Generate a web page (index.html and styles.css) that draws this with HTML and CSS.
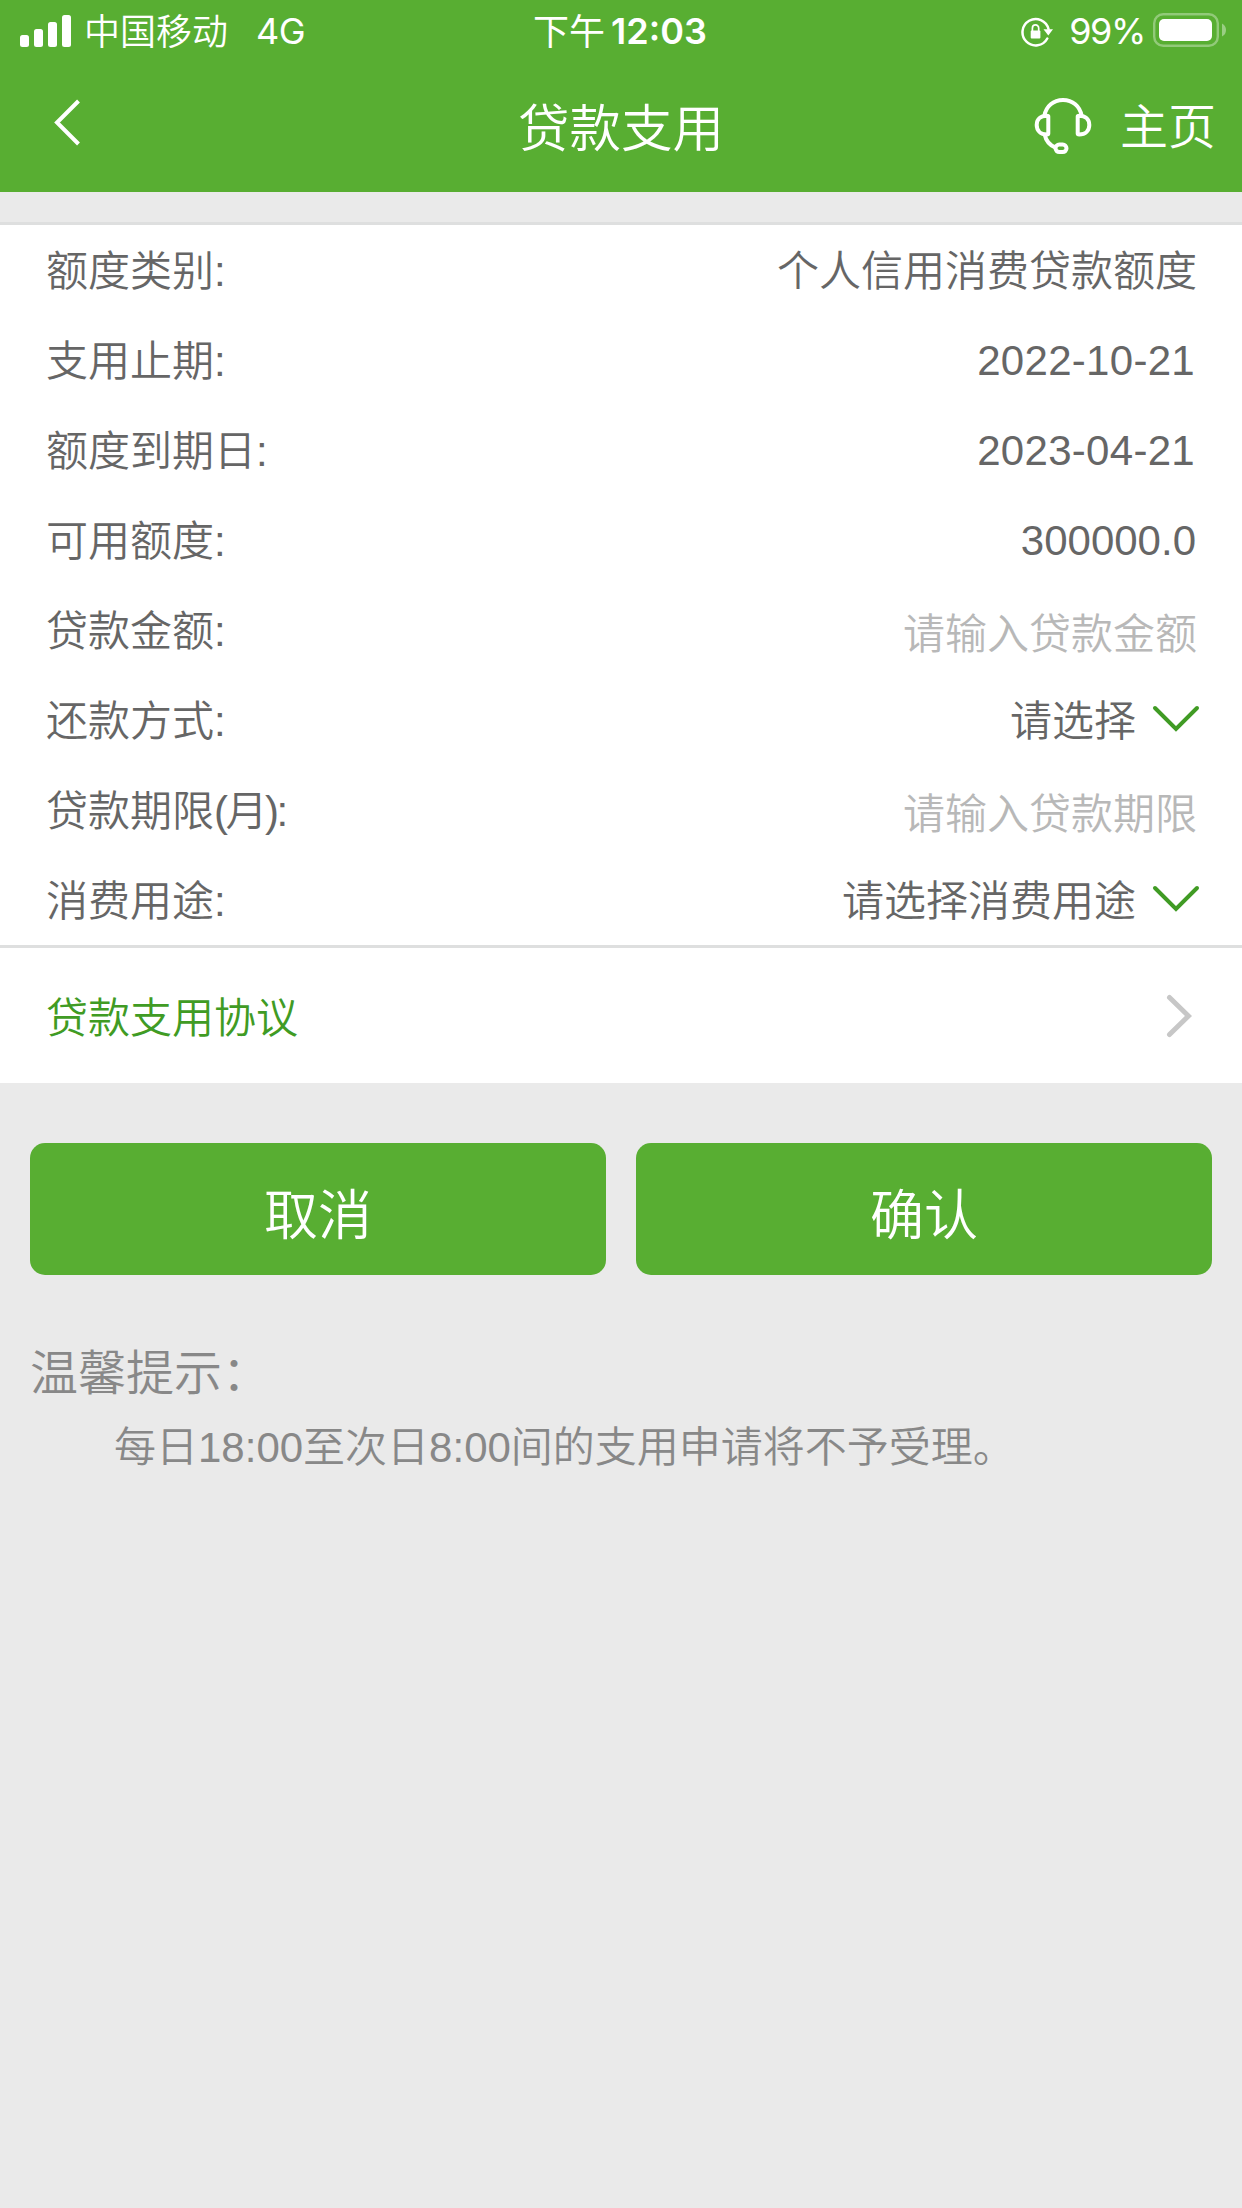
FILE: index.html
```html
<!DOCTYPE html>
<html lang="zh-CN">
<head>
<meta charset="utf-8">
<title>贷款支用</title>
<link rel="stylesheet" href="styles.css">
</head>
<body>
<header class="header">
  <div class="status">
    <div class="status-left">
      <svg class="signal" width="51" height="32" viewBox="0 0 51 32" fill="#fff"><rect y="20" width="9" height="12" rx="2.5"/><rect x="14" y="14" width="9" height="18" rx="2.5"/><rect x="28" y="7" width="9" height="25" rx="2.5"/><rect x="42" width="9" height="32" rx="2.5"/></svg>
      <span class="carrier">中国移动</span>
      <span class="network">4G</span>
    </div>
    <div class="time"><span class="period">下午</span><span class="clock">12:03</span></div>
    <div class="status-right">
      <svg class="lock" width="33" height="30" viewBox="0 0 33 30"><path d="M26.300 21.500A13.200 13.200 0 1 1 27.500 12" fill="none" stroke="#fff" stroke-width="2.5" stroke-linecap="round"/><path d="M22.500 12.200H32l-4.700 6.300z" fill="#fff"/><rect x="9.700" y="13.600" width="9.700" height="7.800" rx="1" fill="#fff"/><path d="M11.400 14v-2.800a3.150 3.300 0 0 1 6.300 0V14" fill="none" stroke="#fff" stroke-width="1.7"/></svg>
      <span class="percent">99%</span>
      <svg class="battery" width="73" height="34" viewBox="0 0 73 34"><rect x="1.200" y="1.200" width="63.600" height="31.600" rx="9" fill="none" stroke="#fff" stroke-opacity=".35" stroke-width="2.4"/><rect x="6" y="6" width="53" height="22" rx="5" fill="#fff"/><path d="M69 10.500q4 2 4 6.500t-4 6.500z" fill="#fff" fill-opacity=".4"/></svg>
    </div>
  </div>
  <nav class="nav">
    <svg class="back" width="28" height="48" viewBox="0 0 28 48"><path d="M25.500 3 4 24.500 25.500 46" fill="none" stroke="#fff" stroke-width="4"/></svg>
    <h1 class="title">贷款支用</h1>
    <div class="nav-right">
      <svg class="headset" width="58" height="58" viewBox="0 0 58 58" fill="none" stroke="#fff" stroke-width="4"><path d="M10.300 19C12 9 19.500 3 29 3s17 6 18.700 16"/><path d="M14.300 19.600v16.800q0 1-1.500 1C6.500 37.400 2.700 33.500 2.700 28S6.500 18.800 12.800 18.800q1.500 0 1.500.8z"/><path d="M43.700 19.600v16.800q0 1 1.500 1c6.300 0 10.100-3.900 10.100-9.400s-3.800-9.200-10.100-9.200q-1.500 0-1.500.8z"/><path d="M10.500 37C12 44 16 48.500 21.500 50.500"/><rect x="21.500" y="47.500" width="11" height="7.600" rx="3.800"/></svg>
      <span class="home">主页</span>
    </div>
  </nav>
</header>
<main>
  <section class="form">
    <div class="row"><span>额度类别:</span><span>个人信用消费贷款额度</span></div>
    <div class="row"><span>支用止期:</span><span class="date">2022-10-21</span></div>
    <div class="row"><span>额度到期日:</span><span class="date">2023-04-21</span></div>
    <div class="row"><span>可用额度:</span><span class="amount">300000.0</span></div>
    <div class="row"><span>贷款金额:</span><span class="placeholder">请输入贷款金额</span></div>
    <div class="row"><span>还款方式:</span><span class="select">请选择<svg width="48" height="28" viewBox="0 0 48 28"><path d="m3 3 21 21L45 3"/></svg></span></div>
    <div class="row"><span>贷款期限<span class="unit">(月)</span>:</span><span class="placeholder">请输入贷款期限</span></div>
    <div class="row"><span>消费用途:</span><span class="select">请选择消费用途<svg width="48" height="28" viewBox="0 0 48 28"><path d="m3 3 21 21L45 3"/></svg></span></div>
  </section>
  <a class="agreement"><span>贷款支用协议</span><svg width="26" height="44" viewBox="0 0 26 44"><path d="m3.500 3.500 19 18.500-19 18.500"/></svg></a>
  <div class="actions"><button class="button">取消</button><button class="button">确认</button></div>
  <section class="tips">
    <h2 class="tips-title">温馨提示：</h2>
    <p class="tips-text">每日18:00至次日8:00间的支用申请将不予受理。</p>
  </section>
</main>
</body>
</html>
```
FILE: styles.css
```css
* { box-sizing: border-box; }
body {
  margin: 0;
  min-height: 2208px;
  background: #eaeaea;
  color: #666;
  font: 350 42px/60px "Liberation Sans", "Noto Sans CJK SC", sans-serif;
  white-space: nowrap;
}
svg { display: block; flex: none; }
.header { height: 192px; background: #58ae32; color: #fff; }
.status {
  display: grid;
  grid-template-columns: 1fr auto 1fr;
  height: 62px;
  padding: 0 16px 0 20px;
  align-items: center;
  font-family: Inter, "Noto Sans CJK SC", sans-serif;
  font-size: 36px;
}
.status-left, .status-right, .time { display: flex; align-items: center; }
.status-right { justify-content: flex-end; }
.signal { margin-top: -1px; }
.carrier { margin-left: 13px; padding-top: 2px; }
.network { margin-left: 28px; font-weight: 400; letter-spacing: -.5px; }
.time { gap: 6px; margin: 0 5px 0 -1px; font-weight: 400; }
.period { padding-top: 2px; }
.clock { font-weight: 600; }
.percent { margin: 0 8px 0 15px; font-weight: 400; letter-spacing: -1.4px; }
.lock { margin-top: 1px; }
.battery { margin-top: -2px; }
.nav {
  display: grid;
  grid-template-columns: 1fr auto 1fr;
  height: 130px;
  padding: 0 26px;
  align-items: center;
}
.back { margin: 0 0 11px 27px; }
.title { margin: 0; padding-top: 3px; font-size: 51.5px; font-weight: inherit; }
.nav-right { display: flex; align-items: center; justify-content: flex-end; gap: 28px; font-size: 48px; }
.headset { margin-bottom: 2px; }
.home { padding-top: 2px; }
.form {
  margin-top: 30px;
  border-top: 3px solid #dedfdf;
  border-bottom: 3px solid #dedfdf;
  background: #fff;
}
.row {
  display: flex;
  height: 90px;
  padding: 4px 45px 0 46px;
  align-items: center;
  justify-content: space-between;
}
.unit { letter-spacing: -2.5px; }
.date { margin: 0 2px 2px 0; letter-spacing: .3px; }
.amount { margin: 0 1px 2px 0; }
.placeholder { padding-top: 6px; color: #b8b8b8; }
.select { display: flex; align-items: center; gap: 16px; margin-right: -3px; }
.select svg { margin-bottom: 6px; fill: none; stroke: #409b24; stroke-width: 4; stroke-linecap: round; }
.agreement {
  display: flex;
  height: 135px;
  padding: 0 50px 0 46px;
  align-items: center;
  justify-content: space-between;
  background: #fff;
  color: #409b24;
}
.agreement span { padding-top: 7px; }
.agreement svg { fill: none; stroke: #c7c7c7; stroke-width: 5; stroke-linecap: round; }
.actions { display: grid; grid-template-columns: 1fr 1fr; gap: 30px; padding: 60px 30px 0; }
.button {
  height: 132px;
  padding: 14px 0 0;
  border: 0;
  border-radius: 15px;
  background: #58ae32;
  color: #fff;
  font: inherit;
  font-size: 54px;
}
.tips { padding: 62px 30px; color: #888; }
.tips-title { margin: 0; font-size: 48px; font-weight: inherit; line-height: 74px; }
.tips-text { margin: 0; padding-left: 84px; line-height: 74px; }
```
